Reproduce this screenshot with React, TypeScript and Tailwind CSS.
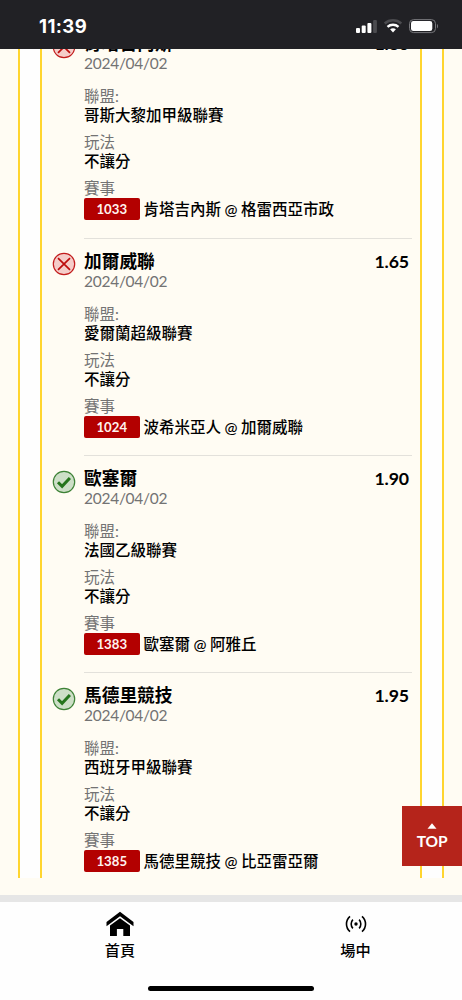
type Bet = {
  team: string;
  odds: string;
  league: string;
  code: string;
  match: string;
  won: boolean;
};

const bets: Bet[] = [
  { team: '肯塔吉內斯', odds: '1.80', league: '哥斯大黎加甲級聯賽', code: '1033', match: '肯塔吉內斯 @ 格雷西亞市政', won: false },
  { team: '加爾威聯', odds: '1.65', league: '愛爾蘭超級聯賽', code: '1024', match: '波希米亞人 @ 加爾威聯', won: false },
  { team: '歐塞爾', odds: '1.90', league: '法國乙級聯賽', code: '1383', match: '歐塞爾 @ 阿雅丘', won: true },
  { team: '馬德里競技', odds: '1.95', league: '西班牙甲級聯賽', code: '1385', match: '馬德里競技 @ 比亞雷亞爾', won: true },
];

function StatusBar() {
  return (
    <header className="h-[49px] shrink-0 bg-[#212125] flex items-center justify-between pl-[39px] pr-[23px] pt-[2px] text-white">
      <span className="font-['Inter'] font-bold text-[18.5px] leading-5 tracking-[0.4px]">11:39</span>
      <svg width="84" height="16" viewBox="0 0 84 16" fill="none">
        <rect x="1" y="10" width="4" height="5" rx="1" fill="#fff" />
        <rect x="6.7" y="7.5" width="4" height="7.5" rx="1" fill="#fff" />
        <rect x="12.4" y="5" width="4" height="10" rx="1" fill="#fff" />
        <rect x="18.1" y="2" width="3.8" height="13" rx="1" fill="#4b4b4f" />
        <path d="M29.7 5.4C34.5 1.2 41.5 1.2 46.3 5.4" stroke="#4b4b4f" strokeWidth="2.6" />
        <path d="M32.5 8.8C35.6 6 40.4 6 43.5 8.8" stroke="#fff" strokeWidth="2.4" />
        <path d="M35.1 11.3c1.7-1.5 4.1-1.5 5.8 0L38 14.6z" fill="#fff" />
        <rect x="54.5" y="1.6" width="26" height="13" rx="4" stroke="#77777b" />
        <rect x="56" y="3.1" width="21.3" height="10" rx="2.4" fill="#fff" />
        <path d="M82 6v4.4c1.4-.6 1.4-3.8 0-4.4z" fill="#77777b" />
      </svg>
    </header>
  );
}

function ResultIcon({ won }: { won: boolean }) {
  return won ? (
    <svg width="24" height="24" viewBox="0 0 24 24" fill="none">
      <circle cx="12" cy="12" r="10.7" fill="#cddfc7" stroke="#3d8236" strokeWidth="1.2" />
      <path d="M6 12.2l4.1 4.1 7.8-8.4" stroke="#25751c" strokeWidth="3" />
    </svg>
  ) : (
    <svg width="24" height="24" viewBox="0 0 24 24" fill="none">
      <circle cx="12" cy="12" r="10.7" fill="#f5cdc9" stroke="#c21b1b" strokeWidth="1.2" />
      <path d="M6 6.2l12 11.6M18 6.2L6 17.8" stroke="#bd0c0c" strokeWidth="1.7" />
    </svg>
  );
}

function BetRow({ bet, last }: { bet: Bet; last: boolean }) {
  return (
    <li className="flex h-[217.4px] pl-[9.5px] pr-2">
      <div className="w-[32.5px] pt-[13.6px]">
        <ResultIcon won={bet.won} />
      </div>
      <div className={`flex-1 pt-3 whitespace-nowrap border-b ${last ? 'border-transparent' : 'border-[#e3e1db]'}`}>
        <div className="flex justify-between pr-[3px] text-[17.7px] leading-[22px] font-bold text-black">
          <span>{bet.team}</span>
          <span className="tracking-[-0.1px]">{bet.odds}</span>
        </div>
        <div className="text-[15.5px] leading-4 tracking-[-0.27px] text-[#737373]">2024/04/02</div>
        <div className="mt-4 text-[15.5px] leading-[18px] text-[#737373]">聯盟:</div>
        <div className="text-[15.5px] leading-5 font-medium text-black">{bet.league}</div>
        <div className="mt-2 text-[15.5px] leading-[18px] text-[#737373]">玩法</div>
        <div className="text-[15.5px] leading-5 font-medium text-black">不讓分</div>
        <div className="mt-2 text-[15.5px] leading-[18px] text-[#737373]">賽事</div>
        <div className="mt-px flex items-center gap-1">
          <span className="w-[55.5px] h-[22px] rounded-[2px] bg-[#b30000] text-center text-[13.2px] leading-[22px] font-bold text-[#fff2ee]">
            {bet.code}
          </span>
          <span className="text-[15.5px] leading-[22px] font-medium text-black [word-spacing:-0.4px]">{bet.match}</span>
        </div>
      </div>
    </li>
  );
}

function BottomNav() {
  return (
    <nav className="relative h-[105px] shrink-0 border-t-[7px] border-[#e6e6e6] bg-[#fefefe] flex text-[15.2px] leading-5 font-medium text-black">
      <a href="#" className="w-[240px] shrink-0 flex flex-col items-center pt-[9px]">
        <svg width="28" height="26" viewBox="0 0 28 26" fill="#000">
          <path d="M14 .8L27.5 11v4.2L14 5.2.5 15.2V11z" />
          <path d="M14 7.2l10 7.4V25h-6.7v-7h-6.4v7H4V14.6z" />
        </svg>
        <span className="mt-[3px]">首頁</span>
      </a>
      <a href="#" className="w-[231px] shrink-0 flex flex-col items-center pt-[13px]">
        <svg width="22" height="18" viewBox="0 0 22 18" fill="none" stroke="#000" strokeWidth="1.6">
          <circle cx="11" cy="9" r="1.7" fill="#000" stroke="none" />
          <path d="M7.9 4.6c-2.3 2.3-2.3 6.5 0 8.8M14.1 4.6c2.3 2.3 2.3 6.5 0 8.8" />
          <path d="M5 1.3C.3 5.5.3 12.5 5 16.7M17 1.3c4.7 4.2 4.7 11.2 0 15.4" />
        </svg>
        <span className="mt-[7px]">場中</span>
      </a>
      <span className="absolute bottom-[9px] left-[148px] h-[5px] w-[166px] rounded-full bg-black" />
    </nav>
  );
}

export default function App() {
  return (
    <div className="relative flex h-[1000px] w-[462px] flex-col overflow-hidden bg-[#fffcf3] font-['Lato','Noto_Sans_CJK_TC',sans-serif]">
      <StatusBar />
      <main className="flex-1 min-h-0 overflow-hidden px-[18px]">
        <div className="h-[829px] overflow-hidden border-x-2 border-[#ffd52f] bg-[#fefefe] pl-5 pr-[20px]">
          <ul className="-mt-[27.8px] border-x-2 border-[#ffd52f] bg-[#fffcf3]">
            {bets.map((bet, i) => (
              <BetRow key={bet.code} bet={bet} last={i === bets.length - 1} />
            ))}
          </ul>
        </div>
      </main>
      <button className="absolute right-0 top-[806px] h-[60px] w-[60px] bg-[#b5241b] flex flex-col items-center pt-[17px] text-white">
        <svg width="10" height="6" viewBox="0 0 10 6" fill="#fff">
          <path d="M5 .3L9.5 5.7h-9z" />
        </svg>
        <span className="mt-[2px] text-[15.5px] leading-5 font-bold tracking-[-0.1px]">TOP</span>
      </button>
      <BottomNav />
    </div>
  );
}
